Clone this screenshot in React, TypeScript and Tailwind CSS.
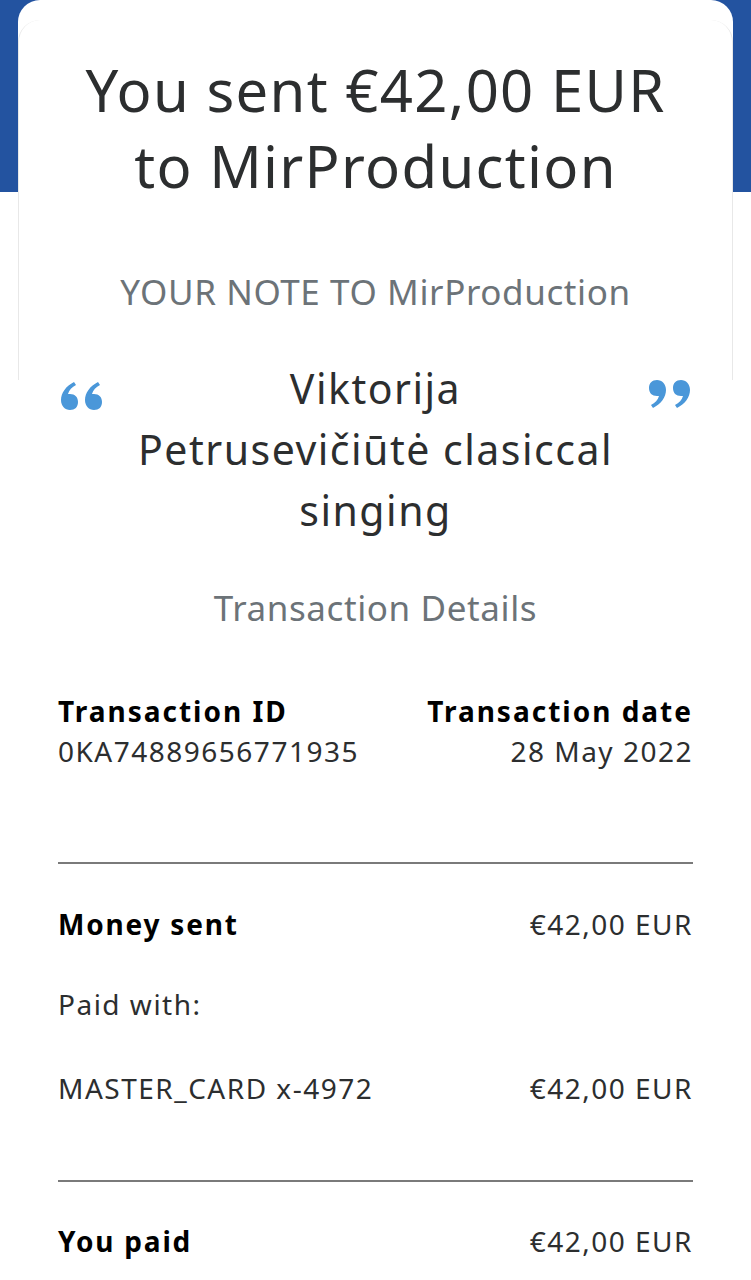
function Quote({ flip }: { flip?: boolean }) {
  return (
    <svg width="48" height="34" viewBox="0 0 48 34" className={flip ? "rotate-180" : ""}>
      <path
        fill="#4a97d9"
        d="M16 4C8 8 3 15 3 22c0 6 4 10 9 10s8-3 8-8-3-8-8-8c-1 0-1 0-2 0 1-4 4-7 8-9zM40 4c-8 4-13 11-13 18 0 6 4 10 9 10s8-3 8-8-3-8-8-8c-1 0-1 0-2 0 1-4 4-7 8-9z"
      />
    </svg>
  );
}

export default function App() {
  return (
    <div
      className="relative min-h-[1280px] overflow-hidden bg-white text-[#2c2e2f]"
      style={{ fontFamily: '"Noto Sans", "Open Sans", sans-serif' }}
    >
      {/* blue header band */}
      <div className="absolute inset-x-0 top-0 h-[192px] bg-[#2353a0]" />

      <main className="relative mx-[18px] min-h-[1280px] rounded-t-[22px] bg-white">
        <div className="absolute inset-x-0 top-[20px] h-[360px] rounded-t-[22px] border-x border-[#e8e8e8]" />

        <section className="relative px-10 pt-[52px] text-center">
          <h1 className="text-[58px] leading-[76px] tracking-[1.3px]">
            You sent €42,00 EUR
            <br />
            to MirProduction
          </h1>

          <p className="mt-[68px] text-[35px] leading-[40px] tracking-[0.6px] text-[#6c7378]">
            YOUR NOTE TO MirProduction
          </p>

          <div className="mt-[46px] flex items-start justify-between">
            <div className="pt-[20px]">
              <Quote />
            </div>
            <p className="text-[41px] leading-[61px] tracking-[1.5px]">
              Viktorija
              <br />
              Petrusevičiūtė clasiccal
              <br />
              singing
            </p>
            <div className="pt-[20px]">
              <Quote flip />
            </div>
          </div>

          <p className="mt-[47px] text-[35px] leading-[40px] tracking-[0.6px] text-[#6c7378]">
            Transaction Details
          </p>
        </section>

        <section className="relative px-10 pt-[63px] text-[28px] leading-[40px] tracking-[1.5px] text-black">
          <div className="flex justify-between">
            <div>
              <div className="font-bold tracking-[2px]">Transaction ID</div>
              <div className="text-[#2c2e2f]">0KA74889656771935</div>
            </div>
            <div className="text-right">
              <div className="font-bold tracking-[2px]">Transaction date</div>
              <div className="text-[#2c2e2f]">28 May 2022</div>
            </div>
          </div>

          <div className="mt-[91px] h-[2px] bg-[#7a7a7a]" />

          <div className="mt-[40px] flex justify-between">
            <span className="font-bold tracking-[1.8px]">Money sent</span>
            <span className="text-[#2c2e2f]">€42,00 EUR</span>
          </div>

          <div className="mt-[40px] text-[#2c2e2f]">Paid with:</div>

          <div className="mt-[44px] flex justify-between text-[#2c2e2f]">
            <span>MASTER_CARD x-4972</span>
            <span>€42,00 EUR</span>
          </div>

          <div className="mt-[72px] h-[2px] bg-[#7a7a7a]" />

          <div className="mt-[39px] flex justify-between">
            <span className="font-bold tracking-[1.8px]">You paid</span>
            <span className="text-[#2c2e2f]">€42,00 EUR</span>
          </div>
        </section>
      </main>
    </div>
  );
}
